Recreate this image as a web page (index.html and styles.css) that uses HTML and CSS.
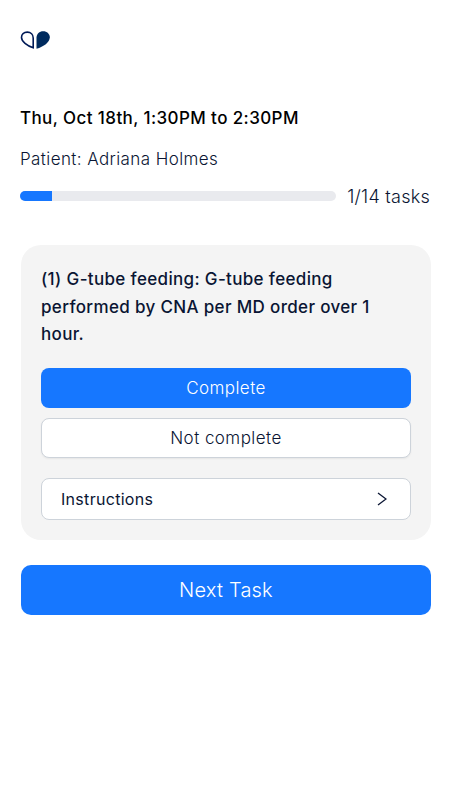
FILE: index.html
```
<!DOCTYPE html>
<html lang="en">
<head>
    <meta charset="UTF-8">
    <title>Visit Tasks</title>
    <link rel="stylesheet" href="styles.css">
</head>
<body>
    <div class="header">
        <svg class="logo" width="30" height="20" viewBox="0 0 30 20">
            <path d="M13.2 17.7V8C13.2 4.4 10.8 2.1 7.3 2.1C3.8 2.1 1.5 4.4 1.5 7.5C1.5 11.4 7 15.8 13.2 17.7Z" fill="none" stroke="#001a57" stroke-width="1.6"/>
            <path d="M16.5 18.7V7.8C16.5 3.8 19.4 1.2 23.2 1.2C27 1.2 29.8 3.9 29.8 7.3C29.8 12.3 23.6 17 16.5 18.7Z" fill="#002b5f"/>
        </svg>
    </div>
    <div class="container">
        <h1 class="visit-time">Thu, Oct 18th, 1:30PM to 2:30PM</h1>
        <div class="patient">Patient: Adriana Holmes</div>
        <div class="progress">
            <div class="progress-bar">
                <div class="progress-fill" style="width: 10%"></div>
            </div>
            <div class="progress-label">1/14 tasks</div>
        </div>
        <div class="task-card">
            <h2 class="task-title">(1) G-tube feeding: G-tube feeding performed by CNA per MD order over 1 hour.</h2>
            <button class="btn btn-complete">Complete</button>
            <button class="btn btn-not-complete">Not complete</button>
            <button class="btn btn-instructions">
                <span>Instructions</span>
                <svg width="10" height="14" viewBox="0 0 10 14">
                    <path d="M1 1L9 7L1 13" fill="none" stroke="#0a1533" stroke-width="1.3"/>
                </svg>
            </button>
        </div>
        <button class="btn btn-next">Next Task</button>
    </div>
</body>
</html>
```

FILE: styles.css
```
body {
    font-family: Inter, sans-serif;
    margin: 0;
    background: white;
    color: #0a1533;
    letter-spacing: 0.4px;
    min-height: 100vh;
}
.header {
    padding: 30px 20px 0;
    height: 76px;
}
.logo {
    display: block;
}
.container {
    padding: 0 19px 0 21px;
}
.visit-time {
    margin: 0 0 0 -1px;
    font-size: 17px;
    font-weight: 500;
    line-height: 24px;
    color: black;
}
.patient {
    margin: 17px 0 0 -1px;
    font-size: 17px;
    font-weight: 300;
    line-height: 24px;
}
.progress {
    display: flex;
    align-items: center;
    margin: 13px 1px 0 -1px;
    height: 24px;
}
.progress-bar {
    flex: 1;
    height: 10px;
    margin-right: 11px;
    background: #e9eaee;
    border-radius: 5px;
    overflow: hidden;
}
.progress-fill {
    height: 100%;
    background: #1677ff;
}
.progress-label {
    font-size: 18px;
    font-weight: 300;
    letter-spacing: 0.25px;
}
.task-card {
    margin-top: 37px;
    padding: 21px 20px 20px;
    background: #f4f4f4;
    border-radius: 20px;
}
.task-title {
    margin: 0 0 19px;
    font-size: 17px;
    font-weight: 500;
    letter-spacing: 0.34px;
    line-height: 27.5px;
}
.btn {
    display: block;
    width: 100%;
    box-sizing: border-box;
    padding: 0;
    border: none;
    border-radius: 8px;
    font-family: inherit;
    font-size: 17px;
    font-weight: 300;
    letter-spacing: 0.45px;
    color: #0a1533;
    cursor: pointer;
}
.btn-complete {
    height: 40px;
    background: #1677ff;
    color: white;
}
.btn-not-complete {
    height: 40px;
    margin-top: 10px;
    background: white;
    border: 1px solid #cdd3da;
    box-shadow: 0 1px 2px rgba(0,0,0,0.06);
}
.btn-instructions {
    display: flex;
    justify-content: space-between;
    align-items: center;
    height: 42px;
    margin-top: 20px;
    padding: 0 23px 0 19px;
    background: white;
    border: 1px solid #cdd3da;
    font-size: 16px;
    font-weight: 400;
    letter-spacing: 0.3px;
}
.btn-next {
    height: 50px;
    margin-top: 25px;
    background: #1677ff;
    border-radius: 10px;
    color: white;
    font-size: 20px;
    letter-spacing: 0.2px;
}
```
